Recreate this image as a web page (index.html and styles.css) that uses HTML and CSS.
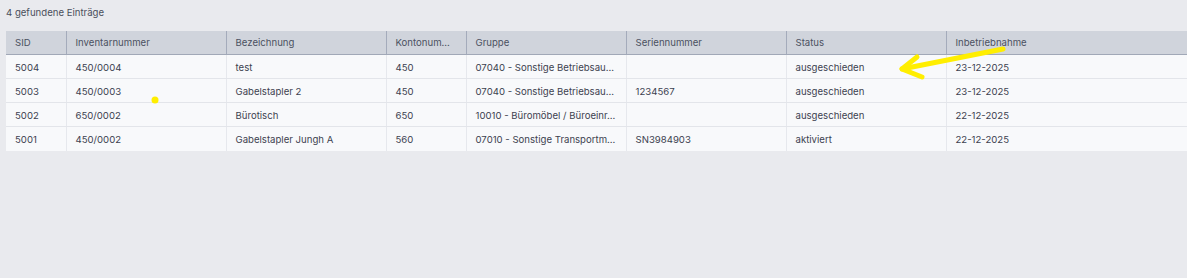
FILE: index.html
```html
<!DOCTYPE html>
<html lang="de">
<head>
<meta charset="utf-8">
<link rel="stylesheet" href="styles.css">
</head>
<body>
<div class="page">
  <div class="count">4 gefundene Einträge</div>
  <table class="grid">
    <colgroup>
      <col class="c-sid"><col class="c-inv"><col class="c-bez"><col class="c-kto"><col class="c-grp"><col class="c-ser"><col class="c-sta"><col class="c-dat">
    </colgroup>
    <thead>
      <tr><th>SID</th><th>Inventarnummer</th><th>Bezeichnung</th><th>Kontonum...</th><th>Gruppe</th><th>Seriennummer</th><th>Status</th><th>Inbetriebnahme</th></tr>
    </thead>
    <tbody>
      <tr><td>5004</td><td>450/0004</td><td>test</td><td>450</td><td>07040 - Sonstige Betriebsau...</td><td></td><td>ausgeschieden</td><td>23-12-2025</td></tr>
      <tr><td>5003</td><td>450/0003</td><td>Gabelstapler 2</td><td>450</td><td>07040 - Sonstige Betriebsau...</td><td>1234567</td><td>ausgeschieden</td><td>23-12-2025</td></tr>
      <tr><td>5002</td><td>650/0002</td><td>Bürotisch</td><td>650</td><td>10010 - Büromöbel / Büroeinr...</td><td></td><td>ausgeschieden</td><td>22-12-2025</td></tr>
      <tr><td>5001</td><td>450/0002</td><td>Gabelstapler Jungh A</td><td>560</td><td>07010 - Sonstige Transportm...</td><td>SN3984903</td><td>aktiviert</td><td>22-12-2025</td></tr>
    </tbody>
  </table>
  <svg class="marks" width="1187" height="278" viewBox="0 0 1187 278">
    <circle cx="155" cy="100" r="3.5" fill="#ffee00"/>
    <g stroke="#ffee00" stroke-width="5" stroke-linecap="round" stroke-linejoin="round" fill="none">
      <path d="M1003 49 L902 69"/>
      <path d="M917 57 L902 69 L922 77"/>
    </g>
  </svg>
</div>
</body>
</html>
```
FILE: styles.css
```css
html, body {
  margin: 0;
  padding: 0;
  background: #e9eaee;
}
.page {
  position: relative;
  padding: 6px 0 0 6px;
  font-family: Inter, "Noto Sans", sans-serif;
  font-size: 9.6px;
  color: #3d4250;
  height: 272px;
}
.count {
  height: 14px;
  line-height: 14px;
  color: #4a4f5c;
  margin-bottom: 11px;
}
.grid {
  border-collapse: collapse;
  table-layout: fixed;
  width: 1181px;
  background: #f8f9fb;
}
.c-sid { width: 60px; }
.c-inv { width: 160px; }
.c-bez { width: 160px; }
.c-kto { width: 80px; }
.c-grp { width: 160px; }
.c-ser { width: 160px; }
.c-sta { width: 160px; }
.c-dat { width: 241px; }
.grid th {
  background: #d0d4dc;
  height: 23px;
  padding: 0 9px;
  text-align: left;
  font-weight: 400;
  color: #4b5161;
  border-left: 1px solid #a4abbb;
  border-bottom: 1px solid #a1a8b7;
  white-space: nowrap;
  overflow: hidden;
}
.grid th:first-child, .grid td:first-child { border-left: none; }
.grid td {
  height: 22px;
  padding: 1px 9px 0;
  border-left: 1px solid #e6e8ed;
  border-bottom: 1px solid #e3e5ea;
  white-space: nowrap;
  overflow: hidden;
}
.grid tbody tr:last-child td { border-bottom: none; height: 23px; }
.marks {
  position: absolute;
  left: 0;
  top: 0;
  pointer-events: none;
}
```
